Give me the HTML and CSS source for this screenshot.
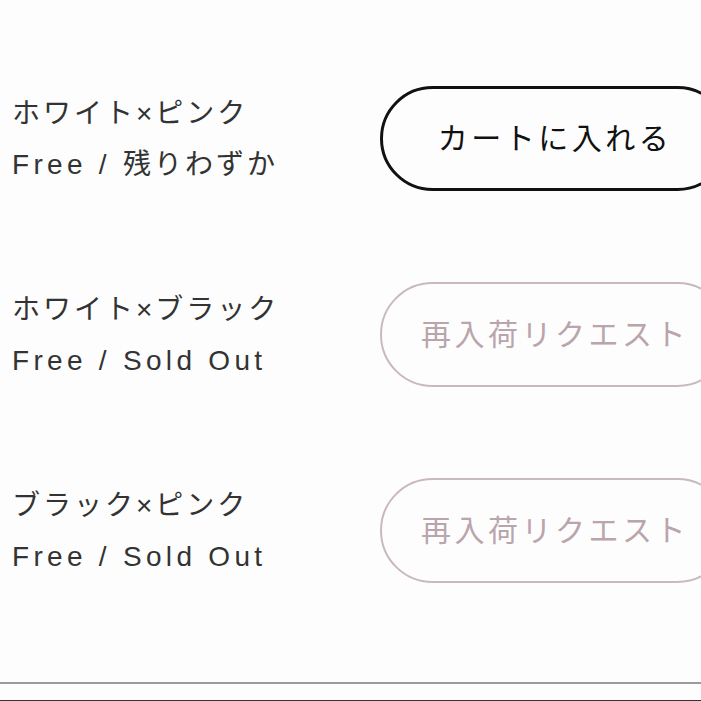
FILE: index.html
```html
<!DOCTYPE html>
<html lang="ja">
<head>
<meta charset="utf-8">
<link rel="stylesheet" href="styles.css">
</head>
<body>
<div class="list">
  <div class="row">
    <div class="label">
      <div class="line">ホワイト×ピンク</div>
      <div class="line"><span class="en">Free / </span>残りわずか</div>
    </div>
    <button class="btn btn-cart">カートに入れる</button>
  </div>
  <div class="row">
    <div class="label">
      <div class="line">ホワイト×ブラック</div>
      <div class="line"><span class="en">Free / Sold Out</span></div>
    </div>
    <button class="btn btn-request">再入荷リクエスト</button>
  </div>
  <div class="row">
    <div class="label">
      <div class="line">ブラック×ピンク</div>
      <div class="line"><span class="en">Free / Sold Out</span></div>
    </div>
    <button class="btn btn-request">再入荷リクエスト</button>
  </div>
</div>
<div class="divider"></div>
<div class="footer-edge"></div>
</body>
</html>
```
FILE: styles.css
```css
html, body {
  margin: 0;
  padding: 0;
  background: #fdfdfd;
  overflow: hidden;
}
body {
  width: 701px;
  height: 701px;
  font-family: "Liberation Sans", "Noto Sans CJK JP", sans-serif;
}
.list {
  display: flex;
  flex-direction: column;
  gap: 91px;
  padding-top: 86px;
  padding-left: 12px;
}
.row {
  display: flex;
  align-items: center;
  height: 105px;
}
.label {
  width: 368px;
  flex: none;
  color: #333;
  font-size: 28px;
  letter-spacing: 3px;
  line-height: 51px;
  white-space: nowrap;
}
.en {
  letter-spacing: 4.3px;
}
.btn {
  flex: none;
  box-sizing: border-box;
  width: 350px;
  height: 105px;
  border-radius: 53px;
  background: transparent;
  font-family: "Noto Sans CJK JP", sans-serif;
  font-size: 30px;
  letter-spacing: 3.5px;
  padding: 0 0 6px 0;
  text-align: center;
}
.btn-cart {
  border: 3px solid #111;
  color: #111;
}
.btn-request {
  border: 2px solid #c9b9be;
  color: #b9a5ab;
}
.divider {
  margin-top: 99px;
  height: 2px;
  background: #9a9a9a;
}
.footer-edge {
  margin-top: 16px;
  height: 2px;
  background: #333;
}
```
